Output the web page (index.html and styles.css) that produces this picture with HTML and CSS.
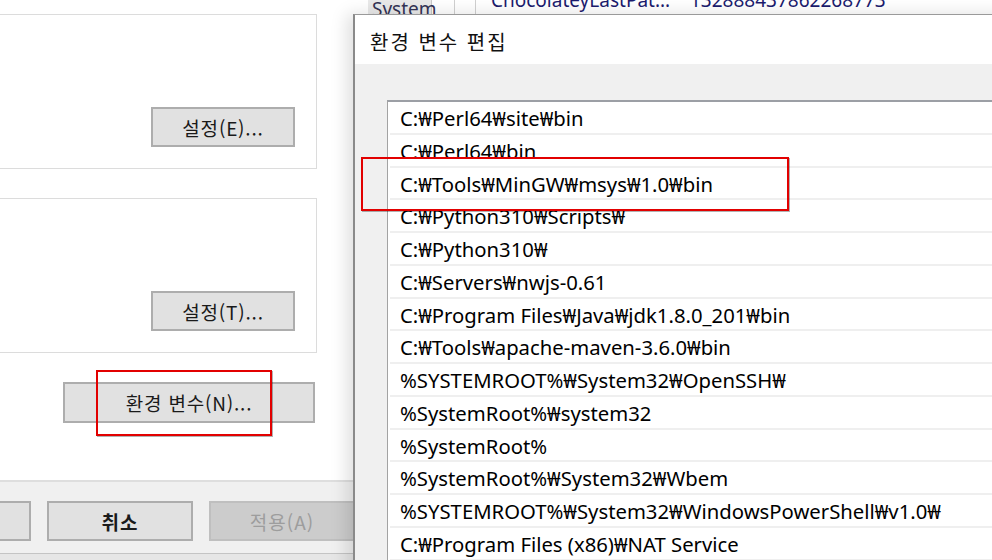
FILE: index.html
```html
<!DOCTYPE html>
<html lang="ko">
<head>
<meta charset="utf-8">
<title>환경 변수 편집</title>
<link rel="stylesheet" href="styles.css">
</head>
<body>
<div class="screen">
  <div class="sysprops">
    <div class="page">
      <div class="group"><button class="btn">설정(E)...</button></div>
      <div class="group group-2"><button class="btn">설정(T)...</button></div>
      <div class="envrow"><button class="btn btn-env">환경 변수(N)...</button></div>
    </div>
    <div class="footer">
      <button class="btn btn-foot btn-first" aria-label="확인"></button>
      <button class="btn btn-foot btn-cancel">취소</button>
      <button class="btn btn-foot btn-disabled">적용(A)</button>
    </div>
    <div class="bottomstrip"></div>
  </div>

  <div class="envwin">
    <div class="hdr-cell">System</div>
    <div class="sep-cell"></div>
    <div class="sep-cell narrow"></div>
    <div class="var-name">ChocolateyLastPat...</div>
    <div class="var-value">132888437862268773</div>
  </div>

  <div class="annot annot-env"></div>

  <div class="dialog">
    <div class="dlg-title">환경 변수 편집</div>
    <div class="dlg-body">
      <div class="pathlist">
        <div class="row">C:₩Perl64₩site₩bin</div>
        <div class="row">C:₩Perl64₩bin</div>
        <div class="row">C:₩Tools₩MinGW₩msys₩1.0₩bin</div>
        <div class="row">C:₩Python310₩Scripts₩</div>
        <div class="row">C:₩Python310₩</div>
        <div class="row">C:₩Servers₩nwjs-0.61</div>
        <div class="row">C:₩Program Files₩Java₩jdk1.8.0_201₩bin</div>
        <div class="row">C:₩Tools₩apache-maven-3.6.0₩bin</div>
        <div class="row">%SYSTEMROOT%₩System32₩OpenSSH₩</div>
        <div class="row">%SystemRoot%₩system32</div>
        <div class="row">%SystemRoot%</div>
        <div class="row">%SystemRoot%₩System32₩Wbem</div>
        <div class="row">%SYSTEMROOT%₩System32₩WindowsPowerShell₩v1.0₩</div>
        <div class="row">C:₩Program Files (x86)₩NAT Service</div>
        <div class="row"></div>
      </div>
    </div>
  </div>

  <div class="annot annot-path"></div>
</div>
</body>
</html>
```

FILE: styles.css
```css
html, body {
  margin: 0;
  padding: 0;
  background: #ffffff;
}

.screen {
  position: relative;
  width: 992px;
  height: 560px;
  overflow: hidden;
  display: flex;
  font-family: "Noto Sans CJK KR", "Noto Sans", sans-serif;
  color: #000;
}

/* ---------- background window: system properties ---------- */
.sysprops {
  width: 353px;
  flex: none;
  display: flex;
  flex-direction: column;
  background: #ffffff;
}

.page {
  height: 480px;
  flex: none;
  box-sizing: border-box;
  padding-top: 14px;
  display: flex;
  flex-direction: column;
}

.group {
  box-sizing: border-box;
  height: 155px;
  width: 337px;
  margin-left: -20px;
  border: 1px solid #dcdcdc;
  display: flex;
  justify-content: flex-end;
  align-items: flex-end;
  padding: 0 21px 21px 0;
}

.group-2 {
  margin-top: 29px;
}

.btn {
  box-sizing: border-box;
  width: 144px;
  height: 40px;
  background: #e1e1e1;
  border: 2px solid #adadad;
  border-radius: 0;
  font-family: "Noto Sans CJK KR", "Noto Sans", sans-serif;
  font-size: 19px;
  letter-spacing: 0.8px;
  color: #1a1a1a;
  padding: 0;
  margin: 0;
  flex: none;
}

.envrow {
  margin-top: 29px;
  display: flex;
}

.btn-env {
  width: 252px;
  height: 41px;
  margin-left: 63px;
}

.footer {
  height: 73px;
  flex: none;
  box-sizing: border-box;
  border-top: 2px solid #dedede;
  background: #f0f0f0;
  display: flex;
  gap: 16px;
  padding-top: 19px;
}

.btn-foot {
  width: 146px;
}

.btn-first {
  margin-left: -115px;
}

.btn-cancel {
  font-weight: 700;
  letter-spacing: 1px;
}

.btn-disabled {
  background: #cccccc;
  border-color: #bfbfbf;
  color: #9d9d9d;
  letter-spacing: 1px;
}

.bottomstrip {
  flex: 1;
  border-top: 1px solid #c4c4c4;
  background: #e6e6e6;
}

/* ---------- window behind the dialog (top strip) ---------- */
.envwin {
  position: absolute;
  left: 340px;
  top: -14px;
  width: 652px;
  height: 28px;
  background: #ffffff;
  display: flex;
  font-family: "Noto Sans", sans-serif;
  font-size: 19px;
  color: #1c1c6e;
}

.hdr-cell {
  margin-left: 28px;
  width: 64px;
  background: #e9e9e9;
  border-right: 1px solid #c9c9c9;
  color: #333355;
  padding: 11px 0 0 4px;
  line-height: 24px;
  box-sizing: border-box;
}

.sep-cell {
  width: 22px;
  border-right: 1px solid #d0d0d0;
}

.sep-cell.narrow {
  width: 20px;
}

.var-name {
  margin-left: 15px;
  width: 199px;
  line-height: 24px;
  padding-top: 2px;
  white-space: nowrap;
}

.var-value {
  line-height: 24px;
  padding-top: 2px;
  white-space: nowrap;
}

/* ---------- dialog: 환경 변수 편집 ---------- */
.dialog {
  position: absolute;
  left: 353px;
  top: 14px;
  width: 720px;
  height: 600px;
  box-sizing: border-box;
  border-left: 2px solid #8a8a8a;
  border-top: 1px solid #9a9a9a;
  background: #f0f0f0;
  box-shadow: -6px 0 16px rgba(0, 0, 0, 0.13);
  display: flex;
  flex-direction: column;
}

.dlg-title {
  height: 49px;
  flex: none;
  box-sizing: border-box;
  background: #ffffff;
  padding: 15px 0 0 15px;
  line-height: 24px;
  font-size: 20px;
  letter-spacing: 2px;
  color: #111;
}

.dlg-body {
  flex: 1;
  padding: 36px 0 0 32px;
}

.pathlist {
  background: #ffffff;
  border-top: 2px solid #9c9fa5;
  border-left: 1px solid #a3a3a3;
  height: 100%;
  box-sizing: border-box;
  padding-left: 2px;
}

.row {
  box-sizing: border-box;
  height: 32.75px;
  border-bottom: 2px solid #efefef;
  padding-left: 10px;
  font-family: "Noto Sans", "Noto Sans CJK KR", sans-serif;
  font-size: 20.3px;
  line-height: 33px;
  white-space: nowrap;
  color: #000;
}

/* ---------- red annotation boxes ---------- */
.annot {
  position: absolute;
  box-sizing: border-box;
  border: 2px solid #e20000;
  box-shadow: 1px 1px 0 rgba(0, 0, 0, 0.3);
}

.annot-env {
  left: 96px;
  top: 370px;
  width: 176px;
  height: 66px;
}

.annot-path {
  left: 361px;
  top: 157px;
  width: 428px;
  height: 54px;
}
```
